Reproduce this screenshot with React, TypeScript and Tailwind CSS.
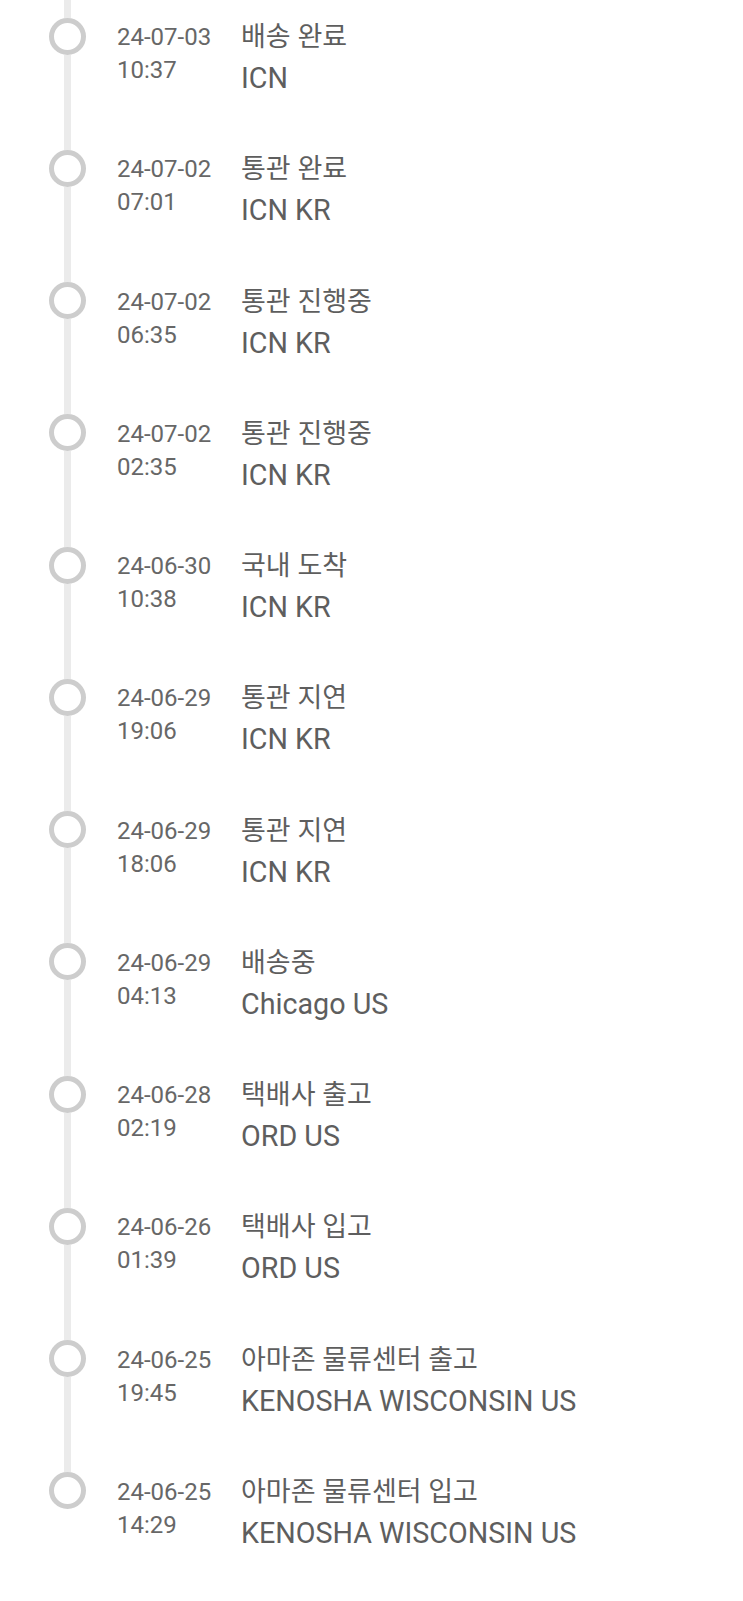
import React from "react";

const rows: [string, string, string, string][] = [
  ["24-07-03", "10:37", "배송 완료", "ICN"],
  ["24-07-02", "07:01", "통관 완료", "ICN KR"],
  ["24-07-02", "06:35", "통관 진행중", "ICN KR"],
  ["24-07-02", "02:35", "통관 진행중", "ICN KR"],
  ["24-06-30", "10:38", "국내 도착", "ICN KR"],
  ["24-06-29", "19:06", "통관 지연", "ICN KR"],
  ["24-06-29", "18:06", "통관 지연", "ICN KR"],
  ["24-06-29", "04:13", "배송중", "Chicago US"],
  ["24-06-28", "02:19", "택배사 출고", "ORD US"],
  ["24-06-26", "01:39", "택배사 입고", "ORD US"],
  ["24-06-25", "19:45", "아마존 물류센터 출고", "KENOSHA WISCONSIN US"],
  ["24-06-25", "14:29", "아마존 물류센터 입고", "KENOSHA WISCONSIN US"],
];

export default function App() {
  return (
    <div
      className="w-[743px] h-[1601px] bg-white overflow-hidden"
      style={{ fontFamily: 'Roboto, "Noto Sans CJK KR", sans-serif' }}
    >
      {rows.map(([d, t, s, l], i) => {
        const last = i === rows.length - 1;
        return (
          <div key={i} className="flex h-[132.27px] pl-[49px]">
            <div className="flex flex-col items-center w-[37px] shrink-0">
              <div className="w-[7px] h-[17.5px] bg-[#ebebeb]" />
              <div className="w-[37px] h-[37px] rounded-full border-[5px] border-[#cdcdcd] bg-white shrink-0" />
              {!last && <div className="w-[7px] flex-1 bg-[#ebebeb]" />}
            </div>
            <div className="ml-[31px] w-[124px] mt-[21px] text-[24px] leading-[33px] text-[#676767]">
              <div>{d}</div>
              <div>{t}</div>
            </div>
            <div className="mt-[16px] text-[28.7px] leading-[41px] text-[#5e5e5e] whitespace-nowrap">
              <div>
                <span className="text-[27px]">{s}</span>
              </div>
              <div>{l}</div>
            </div>
          </div>
        );
      })}
    </div>
  );
}
